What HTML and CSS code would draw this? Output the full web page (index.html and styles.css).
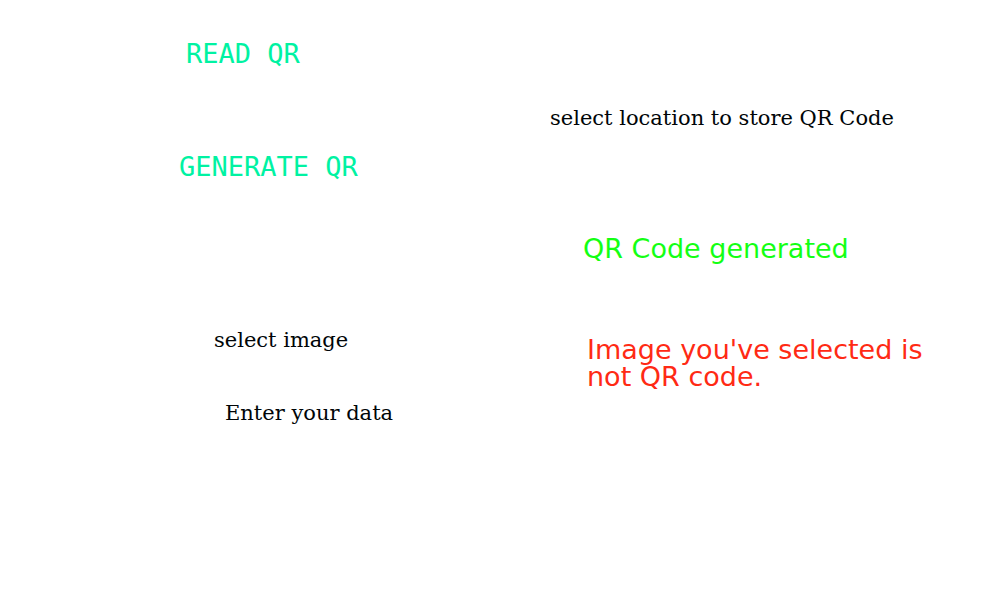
FILE: index.html
```html
<!DOCTYPE html>
<html lang="en">
<head>
<meta charset="utf-8">
<title>QR Code</title>
<link rel="stylesheet" href="styles.css">
</head>
<body>
<main class="app">
  <section class="column actions">
    <button type="button" class="action read">READ QR</button>
    <button type="button" class="action generate">GENERATE QR</button>
    <p class="label image-label">select image</p>
    <p class="label data-label">Enter your data</p>
  </section>
  <section class="column results">
    <p class="label location-label">select location to store QR Code</p>
    <p class="status success" role="status">QR Code generated</p>
    <p class="status error" role="alert">Image you've selected is<br>not QR code.</p>
  </section>
</main>
</body>
</html>
```

FILE: styles.css
```css
* {
  box-sizing: border-box;
}

body {
  margin: 0;
  background: #ffffff;
}

.app {
  display: grid;
  grid-template-columns: 1fr 1fr;
  min-height: 100vh;
}

.column {
  display: flex;
  flex-direction: column;
  align-items: flex-start;
}

.actions {
  padding-top: 40px;
  padding-left: 179px;
}

.results {
  padding-top: 105px;
  padding-left: 50px;
}

.action {
  padding: 0;
  border: 0;
  background: none;
  color: #00f2a2;
  font: 27px/27px "DejaVu Sans Mono", monospace;
  white-space: nowrap;
}

.read {
  margin-left: 7px;
}

.generate {
  margin-top: 86px;
}

.label {
  margin: 0;
  color: #000507;
  font: 21px/27px "DejaVu Serif", serif;
  white-space: nowrap;
}

.image-label {
  margin-top: 147px;
  margin-left: 35px;
}

.data-label {
  margin-top: 46px;
  margin-left: 46px;
}

.status {
  margin: 0;
  font: 27px/27px "DejaVu Sans", sans-serif;
}

.success {
  margin-top: 103px;
  margin-left: 33px;
  color: #14ff14;
}

.error {
  margin-top: 74px;
  margin-left: 37px;
  color: #ff2a14;
}
```
